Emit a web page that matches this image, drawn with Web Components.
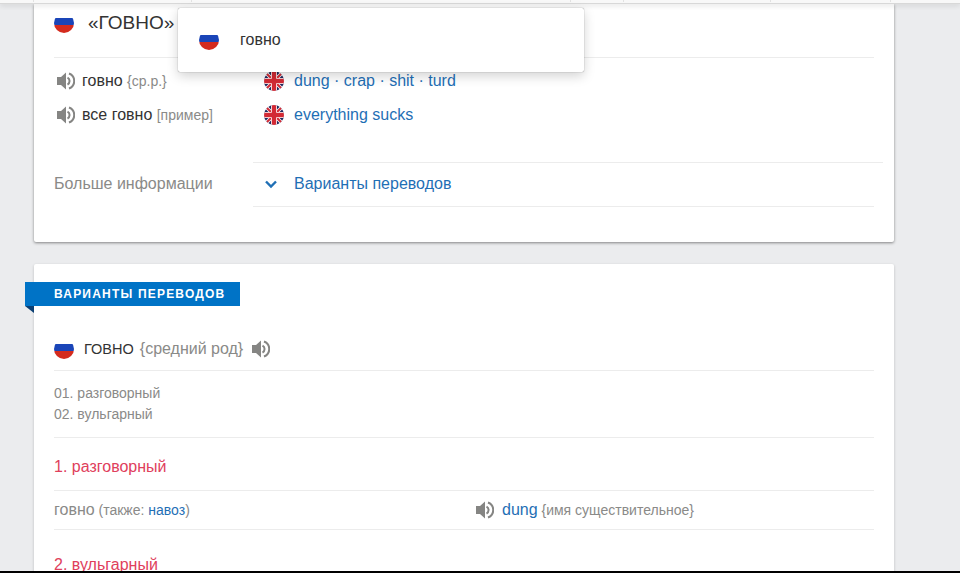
<!DOCTYPE html>
<html lang="ru">
<head>
<meta charset="utf-8">
<title>говно</title>
<style>
    html, body { margin: 0; height: 100%; overflow: hidden; }
    body { background: #ebecee; font-family: "Liberation Sans", Arial, sans-serif; }
</style>
</head>
<body>
<dict-page>
    <dict-summary slot="summary"></dict-summary>
    <dict-card slot="variants"></dict-card>
</dict-page>

<script>
const RU_FLAG = `<svg width="20" height="20" viewBox="0 0 20 20"><defs><clipPath id="c"><circle cx="10" cy="10" r="10"/></clipPath></defs>
    <g clip-path="url(#c)"><rect width="20" height="5" y="0" fill="#fff"/><rect width="20" height="7" y="5" fill="#1a45b8"/><rect width="20" height="8" y="12" fill="#d42b1e"/></g></svg>`;

const UK_FLAG = `<svg width="20" height="20" viewBox="0 0 20 20"><defs><clipPath id="u"><circle cx="10" cy="10" r="10"/></clipPath></defs>
    <g clip-path="url(#u)"><rect width="20" height="20" fill="#1f2a60"/>
    <path d="M0 0L20 20M20 0L0 20" stroke="#fff" stroke-width="3.6"/>
    <path d="M0 0L20 20M20 0L0 20" stroke="#d32a35" stroke-width="2"/>
    <path d="M10 0V20M0 10H20" stroke="#fff" stroke-width="6"/>
    <path d="M10 0V20M0 10H20" stroke="#d32a35" stroke-width="4.4"/></g></svg>`;

const SPEAKER = `<svg width="18" height="18" viewBox="0 0 18 18"><path d="M0 5H4L9 .5V17.500L4 13H0Z" fill="#858583"/>
    <path d="M10.500 5.500A4 4 0 0 1 10.500 12.500" fill="none" stroke="#858583" stroke-width="2"/>
    <path d="M12 1.500A8 8 0 0 1 12 16.500" fill="none" stroke="#858583" stroke-width="2"/></svg>`;

class DictIcon extends HTMLElement {
    connectedCallback() {
        const icons = { ru: RU_FLAG, uk: UK_FLAG, speaker: SPEAKER };
        this.attachShadow({mode: 'open'});
        this.shadowRoot.innerHTML = `<style>
            :host { display: inline-flex; flex: none; line-height: 0; }
        </style>${icons[this.getAttribute('name')]}`;
    }
}

const pageTemplate = document.createElement('template');
pageTemplate.innerHTML = `<style>
        :host { display: flex; flex-direction: column; height: 573px; position: relative; overflow: hidden; }
        .top {
            display: flex;
            height: 4px;
            flex: none;
            background: #f8f8f8;
            border-bottom: 1px solid #d8d8d8;
            box-sizing: border-box;
            box-shadow: 0 2px 5px rgba(0,0,0,.1);
            position: relative;
            z-index: 2;
        }
        .top i { height: 2px; border-right: 1px solid #e2e2e2; }
        main {
            flex: 1;
            min-height: 0;
            overflow: hidden;
            display: flex;
            flex-direction: column;
            gap: 22px;
            padding: 0 66px 0 34px;
        }
        .strip { height: 2px; flex: none; background: #000; }
        .popup {
            position: absolute;
            left: 178px;
            top: 8px;
            width: 406px;
            height: 64px;
            box-sizing: border-box;
            background: #fff;
            border-radius: 2px;
            box-shadow: 0 0 1px rgba(0,0,0,.6), 0 4px 12px rgba(0,0,0,.18);
            display: flex;
            align-items: center;
            gap: 21px;
            padding-left: 21px;
            font-size: 16px;
            color: #333;
            z-index: 3;
        }
    </style>
    <div class="top">
        <i style="width:33px"></i><i style="width:157px"></i><i style="width:378px"></i>
        <i style="width:52px"></i><i style="width:146px"></i><i style="width:119px"></i>
    </div>
    <main>
        <slot name="summary"></slot>
        <slot name="variants"></slot>
    </main>
    <div class="strip"></div>
    <div class="popup"><dict-icon name="ru"></dict-icon><span>говно</span></div>`;

class DictPage extends HTMLElement {
    constructor() {
        super();
        this.attachShadow({mode: 'open'});
        this.shadowRoot.appendChild(pageTemplate.content.cloneNode(true));
    }
}

const summaryTemplate = document.createElement('template');
summaryTemplate.innerHTML = `<style>
        :host {
            display: block;
            flex: none;
            height: 238px;
            box-sizing: border-box;
            background: #fff;
            box-shadow: 0 1px 3px rgba(0,0,0,.45);
            border-radius: 0 0 2px 2px;
            padding: 0 20px;
            color: #333;
        }
        .head {
            display: flex;
            align-items: center;
            gap: 14px;
            height: 54px;
            box-sizing: border-box;
            border-bottom: 1px solid #ececec;
            padding-bottom: 15px;
            font-size: 19px;
        }
        .row { display: grid; grid-template-columns: 210px 1fr; align-items: center; height: 34px; font-size: 16px; }
        .first { margin-top: 6px; }
        .src { display: flex; align-items: center; gap: 7px; padding-left: 3px; }
        .dst { display: flex; align-items: center; gap: 10px; color: #1f6fb5; }
        .muted { color: #8a8a88; font-size: 14px; }
        .more { display: grid; grid-template-columns: 199px 1fr; margin-top: 30px; }
        .more .label { align-self: center; font-size: 16px; color: #8a8a88; padding-bottom: 2px; }
        .more .link {
            position: relative;
            display: flex;
            align-items: center;
            height: 45px;
            box-sizing: border-box;
            border-bottom: 1px solid #ececec;
            padding-left: 11px;
            gap: 16px;
            font-size: 16px;
            color: #1f6fb5;
        }
        .more .link::before {
            content: "";
            position: absolute;
            left: 0;
            right: -9px;
            top: 0;
            border-top: 1px solid #ececec;
        }
    </style>
    <div class="head"><dict-icon name="ru"></dict-icon><span>«ГОВНО»</span></div>
    <div class="row first">
        <div class="src"><dict-icon name="speaker"></dict-icon><span>говно <span class="muted">{ср.р.}</span></span></div>
        <div class="dst"><dict-icon name="uk"></dict-icon><span>dung · crap · shit · turd</span></div>
    </div>
    <div class="row">
        <div class="src"><dict-icon name="speaker"></dict-icon><span>все говно <span class="muted">[пример]</span></span></div>
        <div class="dst"><dict-icon name="uk"></dict-icon><span>everything sucks</span></div>
    </div>
    <div class="more">
        <div class="label">Больше информации</div>
        <div class="link">
            <svg width="14" height="10" viewBox="0 0 14 10"><path d="M2 2.500L7 7.500L12 2.500" fill="none" stroke="#1f6fb5" stroke-width="2.400"/></svg>
            <span>Варианты переводов</span>
        </div>
    </div>`;

class DictSummary extends HTMLElement {
    constructor() {
        super();
        this.attachShadow({mode: 'open'});
        this.shadowRoot.appendChild(summaryTemplate.content.cloneNode(true));
    }
}

const cardTemplate = document.createElement('template');
cardTemplate.innerHTML = `<style>
        :host {
            display: block;
            flex: none;
            position: relative;
            background: #fff;
            height: 340px;
            padding: 0 20px;
            box-shadow: 0 1px 3px rgba(0,0,0,.2);
            border-radius: 2px 2px 0 0;
            color: #333;
        }
        .ribbon {
            position: absolute;
            left: -9px;
            top: 18px;
            width: 215px;
            height: 24px;
            box-sizing: border-box;
            padding-left: 29px;
            background: #0073c6;
            color: #fff;
            font-size: 12px;
            font-weight: bold;
            letter-spacing: 1.200px;
            line-height: 24px;
        }
        .ribbon::after {
            content: "";
            position: absolute;
            left: 0;
            top: 24px;
            border-top: 7px solid #0b3f73;
            border-left: 9px solid transparent;
        }
        .word {
            display: flex;
            align-items: center;
            height: 107px;
            padding-top: 64px;
            box-sizing: border-box;
            border-bottom: 1px solid #ececec;
            gap: 10px;
            font-size: 14.500px;
        }
        .word .muted { font-size: 16px; margin-left: 2px; }
        .word dict-icon[name="speaker"] { margin-left: -1px; }
        .muted { color: #8a8a88; }
        .senses { padding: 12px 0; border-bottom: 1px solid #ececec; font-size: 14px; line-height: 21px; color: #8a8a88; }
        h4 { margin: 0; font-weight: normal; font-size: 16px; line-height: 18px; color: #e0405c; }
        .sense { height: 53px; padding-top: 5px; display: flex; align-items: center; border-bottom: 1px solid #ececec; box-sizing: border-box; }
        .last { padding-top: 26px; }
        .pair { display: grid; grid-template-columns: 422px 1fr; height: 39px; align-items: center; border-bottom: 1px solid #ececec; box-sizing: border-box; font-size: 14px; color: #8a8a88; }
        .pair b { font-weight: normal; font-size: 16px; }
        a { color: #1f6fb5; text-decoration: none; }
        .en { display: flex; align-items: center; gap: 8px; }
        .en a { font-size: 16px; }
    </style>
    <div class="ribbon">ВАРИАНТЫ ПЕРЕВОДОВ</div>
    <div class="word">
        <dict-icon name="ru"></dict-icon>
        <span>ГОВНО <span class="muted">{средний род}</span></span>
        <dict-icon name="speaker"></dict-icon>
    </div>
    <div class="senses">01. разговорный<br>02. вульгарный</div>
    <div class="sense"><h4>1. разговорный</h4></div>
    <div class="pair">
        <div><b>говно</b> (также: <a href="#">навоз</a>)</div>
        <div class="en"><dict-icon name="speaker"></dict-icon><span><a href="#">dung</a> {имя существительное}</span></div>
    </div>
    <div class="last"><h4>2. вульгарный</h4></div>`;

class DictCard extends HTMLElement {
    constructor() {
        super();
        this.attachShadow({mode: 'open'});
        this.shadowRoot.appendChild(cardTemplate.content.cloneNode(true));
    }
}

window.customElements.define('dict-icon', DictIcon);
window.customElements.define('dict-summary', DictSummary);
window.customElements.define('dict-card', DictCard);
window.customElements.define('dict-page', DictPage);
</script>
</body>
</html>
